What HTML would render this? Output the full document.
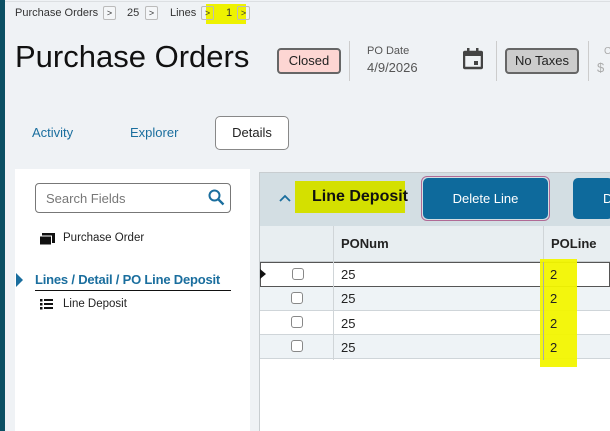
<!DOCTYPE html>
<html><head><style>
*{margin:0;padding:0;box-sizing:border-box}
body{width:610px;height:431px;overflow:hidden;background:#eff2f5;font-family:"Liberation Sans",sans-serif;position:relative;color:#222}
.a{position:absolute}
.bc{font-size:11px;color:#333;top:7px}
.chev{position:absolute;width:13px;height:14px;border:1px solid #bbb;border-radius:2px;font-size:9px;line-height:12px;text-align:center;color:#333;top:6px;background:#f4f6f8}
.row{position:absolute;left:260px;width:350px;height:24px;border-bottom:1px solid #cfd5d9;font-size:13px}
.cb{position:absolute;left:31px;top:5px;width:12px;height:12px;border:1px solid #888;border-radius:3px;background:#fff}
</style></head><body>
<div class="a" style="left:0;top:0;width:5px;height:431px;background:#0b4f63"></div>
<div class="a" style="left:5px;top:1px;width:605px;height:1px;background:#dcdfe2"></div>
<div class="a bc" style="left:15px">Purchase Orders</div>
<div class="chev" style="left:103px">&gt;</div>
<div class="a bc" style="left:127px">25</div>
<div class="chev" style="left:145px">&gt;</div>
<div class="a bc" style="left:170px">Lines</div>
<div class="a" style="left:206px;top:4px;width:40px;height:20px;background:#eef200"></div>
<div class="chev" style="left:201px;background:transparent">&gt;</div>
<div class="a bc" style="left:226px">1</div>
<div class="chev" style="left:237px;background:transparent">&gt;</div>
<div class="a" style="left:15px;top:39px;font-size:31px;color:#111">Purchase Orders</div>
<div class="a" style="left:277px;top:48px;width:64px;height:26px;background:#fdd6d3;border:2px solid #666;border-radius:4px;font-size:13px;line-height:22px;text-align:center">Closed</div>
<div class="a" style="left:349px;top:41px;width:1px;height:40px;background:#ccc"></div>
<div class="a" style="left:367px;top:45px;font-size:11px;color:#555">PO Date</div>
<div class="a" style="left:367px;top:60px;font-size:13px;color:#555">4/9/2026</div>
<svg class="a" style="left:463px;top:48px" width="20" height="22" viewBox="0 0 20 22"><rect x="1" y="4" width="18" height="16" rx="1" fill="none" stroke="#444" stroke-width="2.5"/><rect x="1" y="3" width="18" height="5" fill="#444"/><rect x="4" y="0" width="2.5" height="4" fill="#444"/><rect x="13" y="0" width="2.5" height="4" fill="#444"/><rect x="11" y="13" width="4" height="4" fill="#444"/></svg>
<div class="a" style="left:496px;top:41px;width:1px;height:40px;background:#ccc"></div>
<div class="a" style="left:505px;top:48px;width:74px;height:26px;background:#ccc;border:2px solid #666;border-radius:4px;font-size:13px;line-height:22px;text-align:center">No Taxes</div>
<div class="a" style="left:588px;top:41px;width:1px;height:40px;background:#ccc"></div>
<div class="a" style="left:597px;top:60px;font-size:13px;color:#aaa">$</div>
<div class="a" style="left:604px;top:46px;font-size:10px;color:#aaa">C</div>
<div class="a" style="left:32px;top:125px;font-size:13px;color:#1a6e9e">Activity</div>
<div class="a" style="left:130px;top:125px;font-size:13px;color:#1a6e9e">Explorer</div>
<div class="a" style="left:215px;top:116px;width:74px;height:34px;background:#fff;border:1px solid #888;border-radius:5px;font-size:13px;line-height:32px;text-align:center">Details</div>
<div class="a" style="left:15px;top:169px;width:235px;height:262px;background:#fff"></div>
<div class="a" style="left:35px;top:183px;width:196px;height:30px;border:1px solid #777;border-radius:4px;background:#fff;font-size:13px;color:#777;padding:7px 10px">Search Fields</div>
<svg class="a" style="left:208px;top:189px" width="17" height="17" viewBox="0 0 17 17"><circle cx="6.5" cy="6.5" r="5" fill="none" stroke="#1a6e9e" stroke-width="2"/><path d="M10 10l5.5 5.5" stroke="#1a6e9e" stroke-width="2.3"/></svg>
<svg class="a" style="left:39px;top:233px" width="17" height="13"><rect x="3" y="0" width="13" height="10" fill="#111"/><rect x="0.5" y="3" width="12" height="9" fill="#111" stroke="#fff" stroke-width="1"/></svg>
<div class="a" style="left:63px;top:232px;font-size:11.5px">Purchase Order</div>
<div class="a" style="left:16px;top:273px;width:0;height:0;border-left:7px solid #1a6e9e;border-top:7px solid transparent;border-bottom:7px solid transparent"></div>
<div class="a" style="left:35px;top:272px;font-size:13px;font-weight:bold;color:#1a6e9e;letter-spacing:-0.2px">Lines / Detail / PO Line Deposit</div>
<div class="a" style="left:35px;top:290px;width:196px;height:1px;background:#111"></div>
<svg class="a" style="left:40px;top:298px" width="13" height="12"><rect x="0" y="1" width="2.5" height="2.5" fill="#111"/><rect x="4" y="1" width="9" height="2" fill="#111"/><rect x="0" y="5" width="2.5" height="2.5" fill="#111"/><rect x="4" y="5" width="9" height="2" fill="#111"/><rect x="0" y="9" width="2.5" height="2.5" fill="#111"/><rect x="4" y="9" width="9" height="2" fill="#111"/></svg>
<div class="a" style="left:63px;top:298px;font-size:11.5px">Line Deposit</div>
<div class="a" style="left:259px;top:172px;width:351px;height:259px;background:#fff;border-left:1px solid #c8cdd0"></div>
<div class="a" style="left:260px;top:172px;width:350px;height:54px;background:#d3dee3;border-top:1px solid #c8cdd0"></div>
<svg class="a" style="left:279px;top:194px" width="12" height="8"><path d="M1 7l5-5 5 5" fill="none" stroke="#1a6e9e" stroke-width="1.8"/></svg>
<div class="a" style="left:295px;top:181px;width:110px;height:32px;background:#d4e000"></div>
<div class="a" style="left:312px;top:188px;font-size:16px;font-weight:bold;color:#111">Line Deposit</div>
<div class="a" style="left:421px;top:176px;width:129px;height:45px;border:1px solid #b06a95;border-radius:6px"></div>
<div class="a" style="left:423px;top:178px;width:125px;height:41px;background:#0e6a9c;border-radius:5px;color:#fff;font-size:13px;line-height:41px;text-align:center">Delete Line</div>
<div class="a" style="left:573px;top:178px;width:40px;height:41px;background:#0e6a9c;border-radius:5px;color:#fff;font-size:13px;line-height:41px;padding-left:30px">D</div>
<div class="a" style="left:260px;top:226px;width:350px;height:36px;background:#e8eef1;border-bottom:1px solid #c8cdd0"></div>
<div class="a" style="left:333px;top:226px;width:1px;height:134px;background:#d0d5d8"></div>
<div class="a" style="left:543px;top:226px;width:1px;height:134px;background:#d0d5d8"></div>
<div class="a" style="left:341px;top:236px;font-size:13px;font-weight:bold">PONum</div>
<div class="a" style="left:551px;top:236px;font-size:13px;font-weight:bold">POLine</div>
<div class="row" style="top:262px;background:#fff;border:1px solid #555;height:25px"><div class="cb"></div></div>
<div class="row" style="top:287px;background:#eef3f6"><div class="cb"></div></div>
<div class="row" style="top:311px;background:#fff"><div class="cb"></div></div>
<div class="row" style="top:335px;background:#eef3f6"><div class="cb"></div></div>
<div class="a" style="left:333px;top:262px;width:1px;height:98px;background:#d0d5d8"></div>
<div class="a" style="left:260px;top:269px;width:0;height:0;border-left:6px solid #111;border-top:5px solid transparent;border-bottom:5px solid transparent"></div>
<div class="a" style="left:540px;top:259px;width:37px;height:108px;background:#f2f500;opacity:.95"></div>
<div class="a" style="left:543px;top:262px;width:1px;height:98px;background:#aaa"></div>
<div class="a" style="left:341px;top:263px;font-size:13px;line-height:24.3px">25<br>25<br>25<br>25</div>
<div class="a" style="left:550px;top:263px;font-size:13px;line-height:24.3px">2<br>2<br>2<br>2</div>
</body></html>
